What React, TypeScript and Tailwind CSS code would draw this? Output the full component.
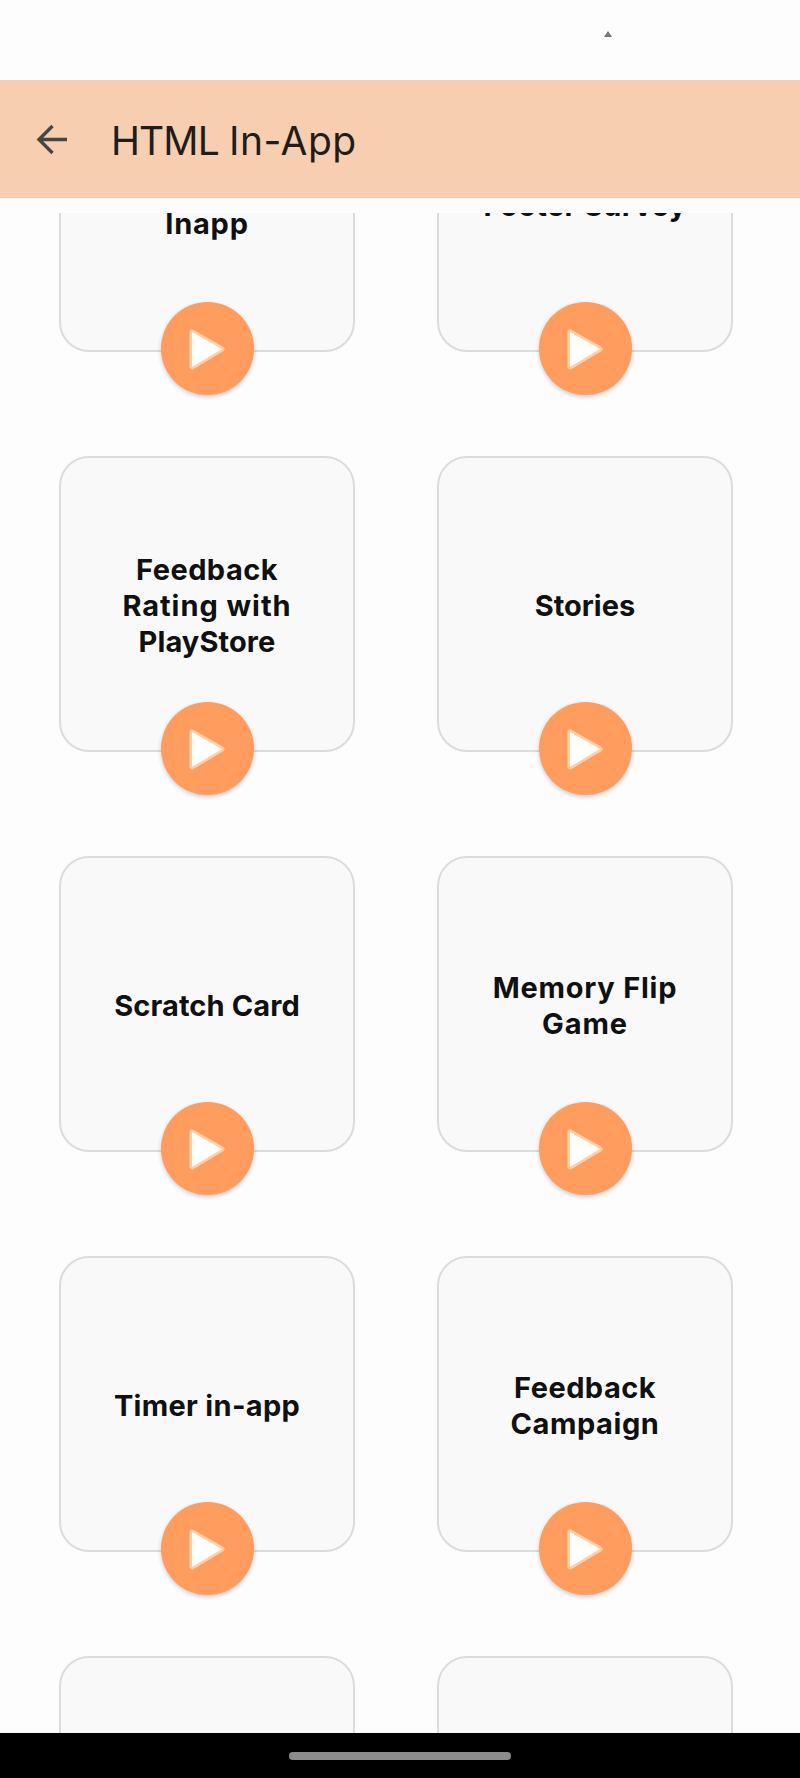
type Line = { text: string; tracking?: string };
type Card = { lines: Line[] };

const cards: Card[] = [
  { lines: [{ text: "" }, { text: "Inapp", tracking: "tracking-[0.8px]" }] },
  { lines: [{ text: "Footer Survey", tracking: "tracking-[0.35px]" }] },
  {
    lines: [
      { text: "Feedback", tracking: "tracking-[0.45px]" },
      { text: "Rating with", tracking: "tracking-[0.95px]" },
      { text: "PlayStore", tracking: "tracking-[0.1px]" },
    ],
  },
  { lines: [{ text: "Stories" }] },
  { lines: [{ text: "Scratch Card", tracking: "tracking-[0.12px]" }] },
  {
    lines: [
      { text: "Memory Flip", tracking: "tracking-[0.75px]" },
      { text: "Game", tracking: "tracking-[0.9px]" },
    ],
  },
  { lines: [{ text: "Timer in-app", tracking: "tracking-[0.3px]" }] },
  {
    lines: [
      { text: "Feedback", tracking: "tracking-[0.45px]" },
      { text: "Campaign", tracking: "tracking-[0.55px]" },
    ],
  },
  { lines: [] },
  { lines: [] },
];

function PlayButton() {
  return (
    <button
      aria-label="Play"
      className="absolute left-[99.5px] top-[244px] size-[93px] rounded-full bg-[#ff9c5e] shadow-[0_2px_4px_rgba(0,0,0,0.2)]"
    >
      <svg viewBox="0 0 93 93" className="size-full">
        <path d="M31 30 61 47 31 65Z" fill="#ffcfa8" stroke="#ffcfa8" strokeWidth="5" strokeLinejoin="round" />
        <path d="M31 30 61 47 31 65Z" fill="#fff" />
      </svg>
    </button>
  );
}

function CampaignCard({ lines }: Card) {
  return (
    <div className="relative flex h-[296px] w-[296px] flex-col items-center justify-center rounded-[30px] border-2 border-[#dcdcdb] bg-[#f9f9f9] pt-1 text-[29px] font-bold leading-9 text-[#101010]">
      {lines.map((line, i) => (
        <span key={i} className={`block h-9 whitespace-nowrap ${line.tracking ?? ""}`}>
          {line.text}
        </span>
      ))}
      <PlayButton />
    </div>
  );
}

export default function App() {
  return (
    <div className="flex h-[1778px] w-[800px] flex-col overflow-hidden bg-[#fdfdfd] font-['Inter',sans-serif]">
      <div className="flex h-20 shrink-0 justify-end pr-[188px] pt-[31px]">
        <svg width="8" height="6" viewBox="0 0 8 6">
          <path d="M4 0 8 6H0Z" fill="#777" />
        </svg>
      </div>
      <header className="flex h-[118px] shrink-0 items-center bg-[#f7cfb0] pl-9">
        <svg width="32" height="32" viewBox="0 0 32 32" fill="none" stroke="#454545" strokeWidth="3.4">
          <path d="M31 16.5H3M16.500 3 3 16.500l13.500 13.500" />
        </svg>
        <h1 className="ml-[43px] whitespace-nowrap pt-0.5 text-[39px] leading-none text-[#1f1d1b]">
          <span className="tracking-[-0.9px]">HTML </span>
          <span className="tracking-[0.5px]">In-App</span>
        </h1>
      </header>
      <main className="mt-[15px] min-h-0 flex-1 overflow-hidden">
        <div className="-mt-[157px] grid grid-cols-[296px_296px] gap-x-[82px] gap-y-[104px] pl-[59px]">
          {cards.map((card, i) => (
            <CampaignCard key={i} lines={card.lines} />
          ))}
        </div>
      </main>
      <footer className="flex h-[45px] shrink-0 justify-center bg-black pt-[19px]">
        <div className="h-2 w-[222px] rounded-full bg-[#8c8c8c]" />
      </footer>
    </div>
  );
}
